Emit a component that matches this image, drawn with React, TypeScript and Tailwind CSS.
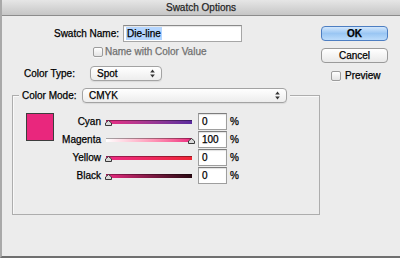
import React from "react";

const font = { fontFamily: '"Liberation Sans", Arial, sans-serif' };

function Checkbox() {
  return (
    <span className="block w-[10px] h-[10px] shrink-0 rounded-[2px] border border-[#9c9c9c] bg-gradient-to-b from-white to-[#e4e4e4] shadow-[0_1px_0_rgba(255,255,255,0.6)]" />
  );
}

function Arrows() {
  return (
    <svg width="5" height="9" viewBox="0 0 5 9" className="shrink-0">
      <path d="M2.5 0.5 L4.8 3.4 L0.2 3.4 Z" fill="#333" />
      <path d="M2.5 8.5 L4.8 5.6 L0.2 5.6 Z" fill="#333" />
    </svg>
  );
}

function Popup({ label, width }: { label: string; width: string }) {
  return (
    <div
      className={`${width} h-[15px] flex items-center justify-between pl-[6px] pr-[6px] rounded-[4px] border border-[#a3a3a3] bg-gradient-to-b from-white to-[#ededed] shadow-[0_1px_1px_rgba(0,0,0,0.08)] text-[10px] text-black`}
    >
      <span className="leading-none">{label}</span>
      <Arrows />
    </div>
  );
}

type Row = { name: string; value: string; track: string; thumbRight?: boolean };

const rows: Row[] = [
  { name: "Cyan", value: "0", track: "bg-gradient-to-r from-[#ec2a82] to-[#5b2b9e]" },
  { name: "Magenta", value: "100", track: "bg-gradient-to-r from-white to-[#ec1f7f]", thumbRight: true },
  { name: "Yellow", value: "0", track: "bg-gradient-to-r from-[#ec2a82] to-[#ef2433]" },
  { name: "Black", value: "0", track: "bg-gradient-to-r from-[#ec2a82] to-[#2a0812]" },
];

function Thumb() {
  return (
    <svg width="7" height="6" viewBox="0 0 7 6">
      <path d="M3.5 0.5 L6.5 3 L6.5 5.5 L0.5 5.5 L0.5 3 Z" fill="#d9d9d9" stroke="#3a3a3a" strokeWidth="1" />
    </svg>
  );
}

function SliderRow({ row }: { row: Row }) {
  return (
    <div className="flex items-center h-[17px]">
      <span className="w-[45px] ml-[2px] text-right text-[10px] text-black leading-none">{row.name}</span>
      <div className="relative ml-[5px] w-[86px] h-[17px] flex items-center">
        <div className={`w-full h-[4px] ${row.track} shadow-[inset_0_1px_0_rgba(0,0,0,0.35)]`} />
        <div className={`absolute top-[7px] ${row.thumbRight ? "right-[-3px]" : "left-[-1px]"}`}>
          <Thumb />
        </div>
      </div>
      <div className="ml-[6px] w-[29px] h-[17px] flex items-center pl-[3px] bg-white border border-[#9e9e9e] border-t-[#7d7d7d] shadow-[inset_0_1px_1px_rgba(0,0,0,0.12)] text-[10px] text-black leading-none">
        {row.value}
      </div>
      <span className="ml-[3px] text-[10px] text-black leading-none">%</span>
    </div>
  );
}

export default function App() {
  return (
    <div
      style={font}
      className="w-[400px] h-[258px] bg-[#ececec] flex flex-col border-l-2 border-l-[#a9a9a9] border-b-2 border-b-[#6f6f6f] [-webkit-text-stroke:0.25px]"
    >
      <div className="h-[16px] shrink-0 flex items-center justify-center bg-gradient-to-b from-[#e6e6e6] to-[#c6c6c6] border-b border-[#8c8c8c] text-[10px] text-[#262626]">
        Swatch Options
      </div>

      <div className="flex">
        <div className="w-[319px] shrink-0 flex flex-col">
          <div className="mt-[9px] flex items-center">
            <span className="w-[117px] text-right text-[10px] text-black leading-none">Swatch Name:</span>
            <div className="ml-[4px] w-[119px] h-[17px] flex items-center pl-[2px] bg-white border border-[#a6a6a6] border-t-[#8a8a8a] shadow-[inset_0_1px_1px_rgba(0,0,0,0.1)]">
              <span className="bg-[#b4d5fe] px-[1px] text-[10px] text-black leading-[13px]">Die-line</span>
            </div>
          </div>

          <div className="mt-[4px] ml-[91px] h-[12px] flex items-center">
            <Checkbox />
            <span className="ml-[2px] text-[10px] text-[#707070] leading-none">Name with Color Value</span>
          </div>

          <div className="mt-[8px] ml-[22px] flex items-center">
            <span className="w-[66px] text-[10px] text-black leading-none">Color Type:</span>
            <Popup label="Spot" width="w-[72px]" />
          </div>

          <div className="mt-[14px] ml-[10px] w-[308px] h-[120px] border border-[#adadad] shadow-[inset_1px_1px_0_rgba(255,255,255,0.7)]">
            <div className="-mt-[8px] ml-[6px] w-fit flex items-center bg-[#ececec] px-[3px]">
              <span className="w-[60px] text-[10px] text-black leading-none">Color Mode:</span>
              <Popup label="CMYK" width="w-[205px]" />
            </div>

            <div className="mt-[10px] flex">
              <div className="ml-[13px] w-[28px] h-[28px] shrink-0 bg-[#e9277d] border border-[#3d3d3d]" />
              <div className="flex flex-col gap-[1px]">
                {rows.map((r) => (
                  <SliderRow key={r.name} row={r} />
                ))}
              </div>
            </div>
          </div>
        </div>

        <div className="flex flex-col pt-[10px]">
          <div className="w-[67px] h-[15px] flex items-center justify-center rounded-[4px] border border-[#4d7ec2] bg-gradient-to-b from-[#d3e7fc] via-[#9ac6f3] to-[#bcdcfb] text-[10px] font-bold text-black leading-none">
            OK
          </div>
          <div className="mt-[7px] w-[67px] h-[15px] flex items-center justify-center rounded-[4px] border border-[#9a9a9a] bg-gradient-to-b from-white to-[#e9e9e9] text-[10px] text-black leading-none">
            Cancel
          </div>
          <div className="mt-[8px] ml-[10px] flex items-center">
            <Checkbox />
            <span className="ml-[4px] text-[10px] text-black leading-none">Preview</span>
          </div>
        </div>
      </div>
    </div>
  );
}
